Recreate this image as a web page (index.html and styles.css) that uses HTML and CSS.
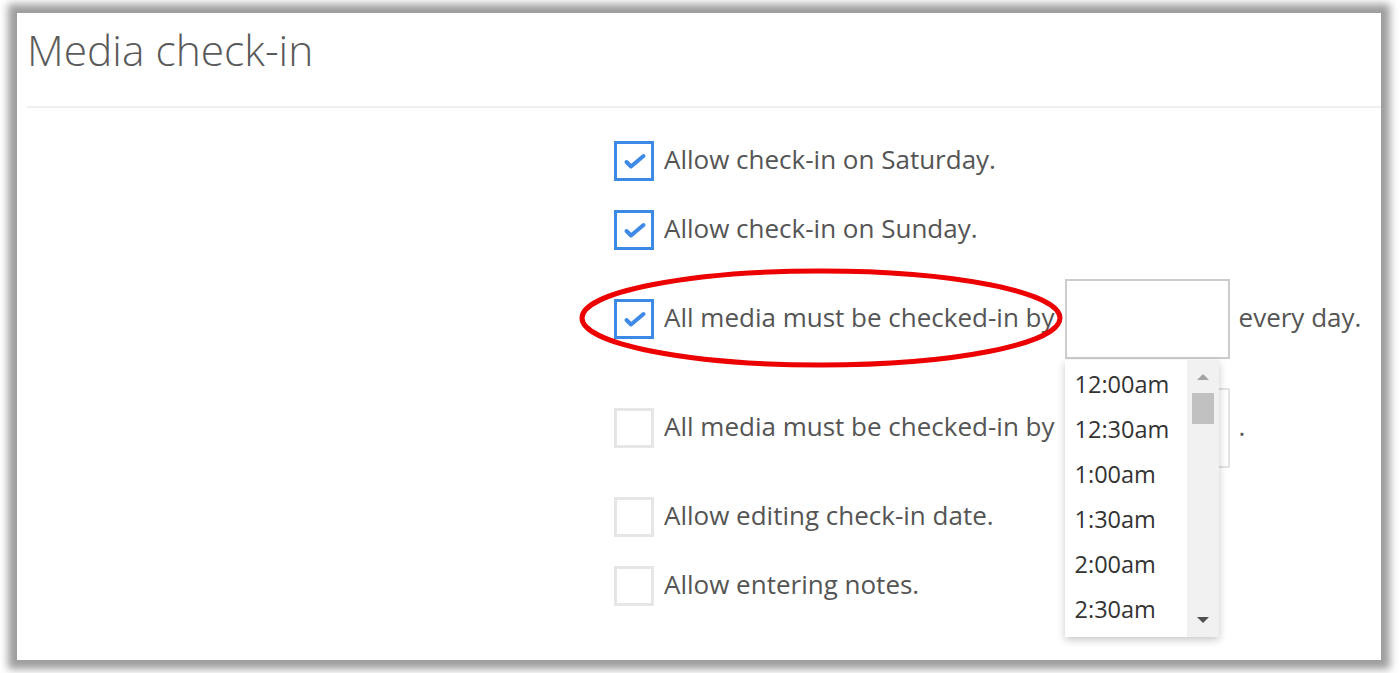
FILE: index.html
```html
<!DOCTYPE html>
<html>
<head>
<meta charset="utf-8">
<link rel="stylesheet" href="styles.css">
</head>
<body>
<div class="frame">
  <div class="header">
    <h1 class="title">Media check-in</h1>
  </div>
  <div class="form">
    <div class="row">
      <span class="cb checked"><svg viewBox="0 0 34 34" width="34" height="34"><path d="M9.5 18 L14 22.5 L26.5 12" fill="none" stroke="#3f8ae6" stroke-width="4" stroke-linecap="round" stroke-linejoin="round"/></svg></span>
      <span class="label">Allow check-in on Saturday.</span>
    </div>
    <div class="row">
      <span class="cb checked"><svg viewBox="0 0 34 34" width="34" height="34"><path d="M9.5 18 L14 22.5 L26.5 12" fill="none" stroke="#3f8ae6" stroke-width="4" stroke-linecap="round" stroke-linejoin="round"/></svg></span>
      <span class="label">Allow check-in on Sunday.</span>
    </div>
    <div class="row">
      <span class="cb checked"><svg viewBox="0 0 34 34" width="34" height="34"><path d="M9.5 18 L14 22.5 L26.5 12" fill="none" stroke="#3f8ae6" stroke-width="4" stroke-linecap="round" stroke-linejoin="round"/></svg></span>
      <span class="label">All media must be checked-in by</span>
      <span class="time-wrap">
        <span class="time-input"></span>
        <div class="dropdown">
          <ul class="options">
            <li>12:00am</li>
            <li>12:30am</li>
            <li>1:00am</li>
            <li>1:30am</li>
            <li>2:00am</li>
            <li>2:30am</li>
          </ul>
          <div class="scrollbar">
            <span class="arrow-up"></span>
            <span class="thumb"></span>
            <span class="arrow-down"></span>
          </div>
        </div>
      </span>
      <span class="label after">every day.</span>
    </div>
    <div class="row">
      <span class="cb"></span>
      <span class="label">All media must be checked-in by</span>
      <span class="time-wrap">
        <span class="time-input light"></span>
      </span>
      <span class="label after">.</span>
    </div>
    <div class="row">
      <span class="cb"></span>
      <span class="label">Allow editing check-in date.</span>
    </div>
    <div class="row">
      <span class="cb"></span>
      <span class="label">Allow entering notes.</span>
    </div>
  </div>
  <svg class="highlight" width="500" height="110" viewBox="0 0 500 110">
    <ellipse cx="250" cy="55" rx="239" ry="47" fill="none" stroke="#ec0000" stroke-width="5"/>
  </svg>
</div>
</body>
</html>
```
FILE: styles.css
```css
html, body {
  margin: 0;
  padding: 0;
  background: #ffffff;
}

body {
  font-family: "Open Sans", "Liberation Sans", sans-serif;
  color: #555555;
}

.frame {
  position: relative;
  box-sizing: border-box;
  width: 1364px;
  height: 647px;
  margin: 13px 19px 13px 17px;
  background: #ffffff;
  box-shadow: 0 0 8px 9px #9e9e9e;
  padding-top: 12px;
}

.header {
  margin-left: 10px;
  padding-bottom: 31px;
  border-bottom: 2px solid #efefef;
}

.title {
  margin: 0;
  font-size: 42.5px;
  font-weight: 300;
  line-height: 50px;
  color: #5a5a5a;
}

.form {
  display: flex;
  flex-direction: column;
  gap: 29px;
  margin-left: 597px;
  padding-top: 33px;
}

.row {
  display: flex;
  align-items: center;
}

.cb {
  box-sizing: border-box;
  width: 40px;
  height: 40px;
  border: 3px solid #e6e6e6;
  display: flex;
  align-items: center;
  justify-content: center;
  flex: none;
}

.cb.checked {
  border-color: #3d8ae6;
}

.label {
  margin-left: 10px;
  padding-bottom: 5px;
  font-size: 26px;
  line-height: 34px;
  color: #555555;
  white-space: nowrap;
}

.label.after {
  margin-left: 9px;
}

.time-wrap {
  position: relative;
  margin-left: 10px;
  display: flex;
}

.time-input {
  box-sizing: border-box;
  width: 165px;
  height: 80px;
  border: 2px solid #cccccc;
  background: #ffffff;
}

.time-input.light {
  border-color: #e3e3e3;
}

.dropdown {
  position: absolute;
  top: 81px;
  left: 0;
  z-index: 5;
  width: 154px;
  height: 277px;
  display: flex;
  background: #ffffff;
  box-shadow: 0 3px 8px rgba(0, 0, 0, 0.22);
}

.options {
  list-style: none;
  margin: 0;
  padding: 2px 0 0 0;
  flex: 1;
}

.options li {
  height: 45px;
  line-height: 45px;
  padding-left: 10px;
  font-size: 23.5px;
  color: #333333;
}

.scrollbar {
  width: 32px;
  background: #f1f1f1;
  display: flex;
  flex-direction: column;
  align-items: center;
  position: relative;
}

.arrow-up {
  margin-top: 14px;
  width: 0;
  height: 0;
  border-left: 6px solid transparent;
  border-right: 6px solid transparent;
  border-bottom: 6px solid #a3a3a3;
}

.thumb {
  margin-top: 13px;
  width: 22px;
  height: 31px;
  background: #c1c1c1;
}

.arrow-down {
  position: absolute;
  bottom: 14px;
  width: 0;
  height: 0;
  border-left: 6px solid transparent;
  border-right: 6px solid transparent;
  border-top: 6px solid #505050;
}

.highlight {
  position: absolute;
  left: 554px;
  top: 250px;
  pointer-events: none;
  z-index: 6;
}
```
